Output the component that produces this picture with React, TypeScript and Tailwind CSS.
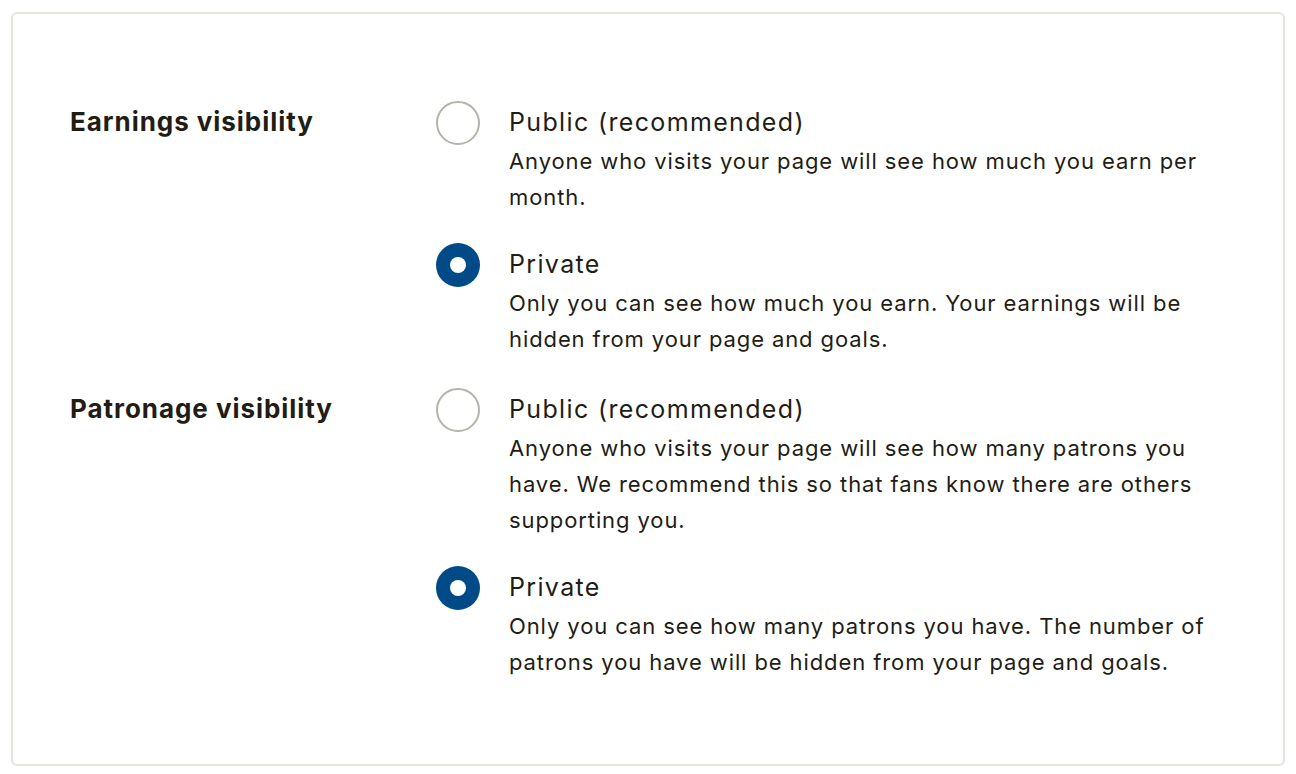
import React from 'react';

type Option = { title: string; description: string; checked: boolean };
type Section = { label: string; options: Option[] };

const sections: Section[] = [
  {
    label: 'Earnings visibility',
    options: [
      {
        title: 'Public (recommended)',
        description: 'Anyone who visits your page will see how much you earn per month.',
        checked: false,
      },
      {
        title: 'Private',
        description:
          'Only you can see how much you earn. Your earnings will be hidden from your page and goals.',
        checked: true,
      },
    ],
  },
  {
    label: 'Patronage visibility',
    options: [
      {
        title: 'Public (recommended)',
        description:
          'Anyone who visits your page will see how many patrons you have. We recommend this so that fans know there are others supporting you.',
        checked: false,
      },
      {
        title: 'Private',
        description:
          'Only you can see how many patrons you have. The number of patrons you have will be hidden from your page and goals.',
        checked: true,
      },
    ],
  },
];

function Radio({ checked }: { checked: boolean }) {
  if (checked) {
    return (
      <span className="flex h-[44px] w-[44px] shrink-0 items-center justify-center rounded-full bg-[#004b87]">
        <span className="h-[16px] w-[16px] rounded-full bg-white" />
      </span>
    );
  }
  return <span className="block h-[44px] w-[44px] shrink-0 rounded-full border-2 border-[#b5b2aa] bg-white" />;
}

export default function App() {
  return (
    <div className="min-h-screen bg-white px-[11px] pt-[12px] pb-[8px] font-['Inter','Noto_Sans',sans-serif] text-[#221d14]">
      <div className="rounded-[6px] border-2 border-[#e6e4df] pl-[57px] pt-[87px] pb-[84px]">
        <div className="flex flex-col gap-[31px]">
          {sections.map((s) => (
            <div key={s.label} className="flex">
              <div className="w-[366px] shrink-0 text-[26px] font-bold leading-[42px] tracking-[0.95px]">
                {s.label}
              </div>
              <div className="flex flex-col gap-[28px]">
                {s.options.map((o, i) => (
                  <div key={i} className="flex gap-[29px]">
                    <Radio checked={o.checked} />
                    <div className="w-[725px]">
                      <div className="text-[25px] leading-[42px] tracking-[1.35px]">{o.title}</div>
                      <div className="text-[22px] leading-[36px] tracking-[0.9px]">{o.description}</div>
                    </div>
                  </div>
                ))}
              </div>
            </div>
          ))}
        </div>
      </div>
    </div>
  );
}
